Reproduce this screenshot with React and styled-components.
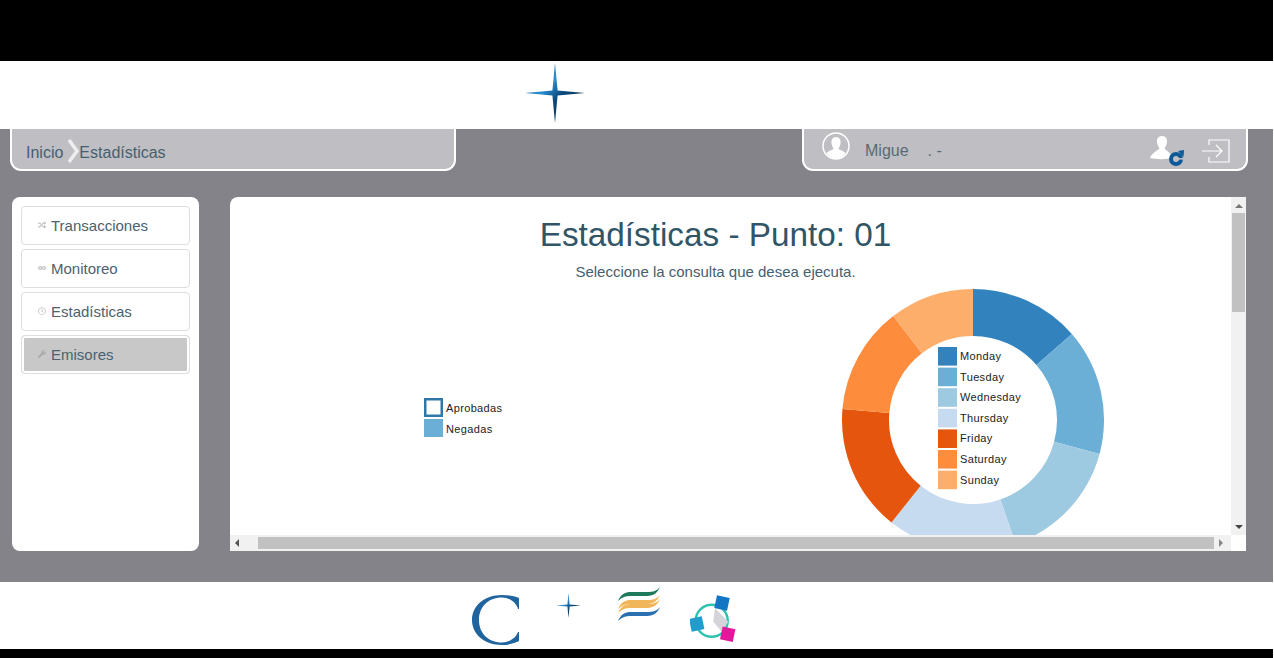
import React from "react";
import styled, { createGlobalStyle } from "styled-components";
import { FaRandom, FaInfinity, FaRegClock, FaWrench } from "react-icons/fa";

const GlobalStyle = createGlobalStyle`
  html, body {
    margin: 0;
    padding: 0;
    background: #fff;
  }
  body {
    font-family: "Liberation Sans", Arial, sans-serif;
    overflow: hidden;
  }
`;

const Page = styled.div`
  width: 1273px;
  height: 658px;
  display: grid;
  grid-template-rows: 61px 68px 453px 67px 9px;
`;

const BlackBand = styled.div`
  background: #000;
`;

const Header = styled.header`
  background: #fff;
  display: flex;
  justify-content: center;
  align-items: flex-start;
  padding: 2px 163px 0 0;
  box-sizing: border-box;
`;

const Main = styled.main`
  background: #848389;
  padding: 0 25px 0 10px;
  display: flex;
  flex-direction: column;
`;

const TopBars = styled.div`
  display: flex;
  justify-content: space-between;
  margin-bottom: 26px;
`;

const TabBar = styled.div`
  width: 446px;
  height: 42px;
  box-sizing: border-box;
  background: #bfbfc3;
  border: 2px solid #fff;
  border-top: 0;
  border-radius: 0 0 11px 11px;
  display: flex;
  align-items: center;
  color: #46606f;
  font-size: 16px;
`;

const Crumbs = styled(TabBar)`
  padding: 8px 0 0 14px;
`;

const Chevron = styled.svg`
  width: 12px;
  height: 24px;
  margin: -4px 0 0 4px;
  flex: none;
`;

const UserBar = styled(TabBar)`
  padding-left: 18px;
`;

const Avatar = styled.svg`
  width: 28px;
  height: 28px;
  margin: -7px 15px 0 0;
  flex: none;
`;

const UserName = styled.span`
  color: #566a78;
  margin-top: 3px;
`;

const UserDots = styled.span`
  color: #566a78;
  margin: 3px 0 0 19px;
`;

const BarIcons = styled.div`
  margin-left: auto;
  display: flex;
  align-items: center;
  gap: 16px;
  padding: 3px 16px 0 0;
`;

const Body = styled.div`
  display: flex;
  gap: 31px;
  margin-left: 2px;
  height: 354px;
`;

const Sidebar = styled.nav`
  width: 187px;
  flex: none;
  box-sizing: border-box;
  background: #fff;
  border-radius: 8px;
  padding: 9px;
  display: flex;
  flex-direction: column;
  gap: 4px;
`;

const MenuItem = styled.div`
  height: 39px;
  box-sizing: border-box;
  border: 1px solid #dedede;
  border-radius: 4px;
  background: ${(props) => (props.$active ? "#c8c8c8" : "#fff")};
  box-shadow: ${(props) => (props.$active ? "inset 0 0 0 2px #fff" : "none")};
  display: flex;
  align-items: center;
  color: #4b626e;
  font-size: 15px;
  line-height: 17px;
  padding: 0 0 1px 16px;
  gap: 5px;

  svg {
    width: 8px;
    height: 8px;
    color: ${(props) => (props.$active ? "#a8a8a8" : "#c4c4c4")};
    flex: none;
  }
`;

const Panel = styled.section`
  width: 1016px;
  flex: none;
  background: #fff;
  border-radius: 8px 0 0 0;
  overflow: hidden;
  display: grid;
  grid-template-columns: 1fr 15px;
  grid-template-rows: 1fr 16px;
`;

const Content = styled.div`
  overflow: hidden;
  min-width: 0;
  min-height: 0;
`;

const Heading = styled.div`
  text-align: center;
  padding-right: 30px;
`;

const Title = styled.h1`
  margin: 18px 0 0;
  font-size: 33.3px;
  line-height: 40px;
  font-weight: 400;
  color: #2f5567;
`;

const Subtitle = styled.p`
  margin: 8px 0 0;
  font-size: 15px;
  line-height: 18px;
  color: #46606f;
`;

const ChartRow = styled.div`
  display: flex;
  align-items: flex-start;
  margin-top: 8px;
  padding-left: 194px;
`;

const BarLegend = styled.svg`
  width: 90px;
  height: 40px;
  margin-top: 109px;
  flex: none;
`;

const Donut = styled.svg`
  width: 262px;
  height: 262px;
  margin-left: 328px;
  flex: none;
`;

const LegendText = styled.text`
  font-family: "Liberation Sans", Arial, sans-serif;
  font-size: 11px;
  letter-spacing: 0.35px;
  fill: #222;
`;

const VTrack = styled.div`
  background: #f1f1f1;
  display: flex;
  flex-direction: column;
  align-items: center;
  justify-content: space-between;
  padding: 5px 0 4px;
  box-sizing: border-box;
`;

const VThumb = styled.div`
  width: 13px;
  height: 99px;
  background: #c1c1c1;
  margin-top: 3px;
`;

const HTrack = styled.div`
  background: #f1f1f1;
  display: flex;
  align-items: center;
  padding: 0 6px 0 3px;
  box-sizing: border-box;
`;

const HThumb = styled.div`
  width: 956px;
  height: 12px;
  background: #c1c1c1;
  margin: 0 auto 0 17px;
`;

const Arrow = styled.svg`
  width: 8px;
  height: 8px;
  flex: none;
`;

const Spacer = styled.div`
  flex: 1;
`;

const Corner = styled.div`
  background: #fff;
`;

const Footer = styled.footer`
  background: #fff;
  display: flex;
  align-items: flex-start;
  padding-left: 472px;
  box-sizing: border-box;
`;

const FooterLogo = styled.div`
  display: flex;
  margin: ${(props) => props.$top || 0}px 0 0 ${(props) => props.$gap || 0}px;
`;

const weekData = [
  { day: "Monday", to: 49, color: "#3182bd" },
  { day: "Tuesday", to: 105, color: "#6baed6" },
  { day: "Wednesday", to: 161, color: "#9ecae1" },
  { day: "Thursday", to: 218.5, color: "#c6dbef" },
  { day: "Friday", to: 274.8, color: "#e6550d" },
  { day: "Saturday", to: 322.5, color: "#fd8d3c" },
  { day: "Sunday", to: 360, color: "#fdae6b" },
];

function polar(r, deg) {
  const a = (deg * Math.PI) / 180;
  return `${(131 + r * Math.sin(a)).toFixed(2)} ${(131 - r * Math.cos(a)).toFixed(2)}`;
}

function arcPath(from, to) {
  const R = 131;
  const r = 84;
  return `M${polar(R, from)} A${R} ${R} 0 0 1 ${polar(R, to)} L${polar(r, to)} A${r} ${r} 0 0 0 ${polar(r, from)} Z`;
}

function DonutChart() {
  return (
    <Donut viewBox="0 0 262 262">
      {weekData.map((d, i) => (
        <path key={d.day} d={arcPath(i ? weekData[i - 1].to : 0, d.to)} fill={d.color} />
      ))}
      {weekData.map((d, i) => (
        <g key={d.day} transform={`translate(96 ${58 + i * 20.6})`}>
          <rect width="19" height="18.6" fill={d.color} />
          <LegendText x="22" y="13">{d.day}</LegendText>
        </g>
      ))}
    </Donut>
  );
}

function Star({ size, id }) {
  return (
    <svg width={size} height={size} viewBox="0 0 60 60">
      <defs>
        <linearGradient id={id} x1="0" y1="0" x2="1" y2="1">
          <stop offset="0" stopColor="#0e3f6b" />
          <stop offset="0.38" stopColor="#2a8fd4" />
          <stop offset="0.56" stopColor="#0d4a7c" />
          <stop offset="1" stopColor="#08182a" />
        </linearGradient>
      </defs>
      <path
        d="M30 0 L32.6 27.4 L60 30 L32.6 32.6 L30 60 L27.4 32.6 L0 30 L27.4 27.4 Z"
        fill={`url(#${id})`}
      />
    </svg>
  );
}

function CLogo() {
  return (
    <svg width="48" height="67" viewBox="0 0 48 67">
      <path
        transform="translate(0 13)"
        d="M47 3 C42 1 36 0 30 0 C12 0 0 11 0 25 C0 39 12 50 30 50 C37 50 43 48 47 46 L47 37 L46 37 C44 43 37 47.5 30 47.5 C16 47.5 7 38 7 25 C7 12 16 2.5 30 2.5 C37 2.5 44 7 46 14 L47 14 Z"
        fill="#1f639f"
      />
    </svg>
  );
}

const ribbon =
  "M1 19 C4 12 8 10 14 10 L30 10 C36 10 40 9 43 5 C41 10 37 14 30 14 L14 14 C9 14 5 15 1 19 Z";

function WavesLogo() {
  return (
    <svg width="44" height="67" viewBox="0 0 44 67">
      <path d={ribbon} fill="#1f7a5c" />
      <path d={ribbon} fill="#f2b65a" transform="translate(0 8)" />
      <path d={ribbon} fill="#f2b65a" transform="translate(0 12)" />
      <path d={ribbon} fill="#2a6fb0" transform="translate(0 20)" />
    </svg>
  );
}

function NodesLogo() {
  return (
    <svg width="46" height="67" viewBox="0 0 46 67">
      <circle cx="21.7" cy="38.7" r="16" fill="none" stroke="#2fc2b0" strokeWidth="2.5" />
      <path d="M25 26 L38.3 39.7 L31.7 49.7 L23.3 39.7 Z" fill="#d4d4da" />
      <rect x="25.5" y="14.5" width="13" height="13" fill="#1376c4" transform="rotate(12 32 21)" />
      <rect x="0.2" y="35.5" width="13" height="13" fill="#1e9dce" transform="rotate(-12 6.7 42)" />
      <rect x="31.2" y="45.8" width="13" height="13" fill="#e5169c" transform="rotate(12 37.7 52.3)" />
    </svg>
  );
}

export default function App() {
  return (
    <Page>
      <GlobalStyle />
      <BlackBand />
      <Header>
        <Star size={60} id="headerStar" />
      </Header>
      <Main>
        <TopBars>
          <Crumbs>
            Inicio
            <Chevron viewBox="0 0 12 24">
              <path d="M2 1 L10 12 L2 23" fill="none" stroke="#eeeef0" strokeWidth="3.5" />
            </Chevron>
            Estadísticas
          </Crumbs>
          <UserBar>
            <Avatar viewBox="0 0 28 28">
              <circle cx="14" cy="14" r="13" fill="#bfbfc3" stroke="#fff" strokeWidth="1.5" />
              <path d="M14 5 C10.5 5 9 8 9.5 11.5 C10 14 11 15.5 11.5 17 C9 18.5 5.5 19.5 4.5 21 C7 25 10.5 26.5 14 26.5 C17.5 26.5 21 25 23.5 21 C22.5 19.5 19 18.5 16.5 17 C17 15.5 18 14 18.5 11.5 C19 8 17.5 5 14 5 Z" fill="#fff" />
            </Avatar>
            <UserName>Migue</UserName>
            <UserDots>. -</UserDots>
            <BarIcons>
              <svg width="37" height="31" viewBox="0 0 37 31">
                <path d="M13 1 C9 1 7.5 4 8 7.5 C8.5 10 9.5 12 10.5 13.5 C8 16 3 18 1 23 C8 24.5 17 24.5 24 23 C22 18 17.5 16 15.5 13.5 C16.5 12 17.5 10 18 7.5 C18.5 4 17 1 13 1 Z" fill="#fff" />
                <circle cx="27" cy="24" r="5" fill="none" stroke="#0d5a98" strokeWidth="4" />
                <path d="M29 16 L35 15 L34.5 22 Z" fill="#0d5a98" />
                <rect x="27" y="23" width="8" height="1.6" fill="#bfbfc3" />
              </svg>
              <svg width="28" height="24" viewBox="0 0 28 24" fill="none" stroke="#fff" strokeWidth="1.2">
                <path d="M7 6 V1 H27 V23 H7 V18" />
                <path d="M0 12 H19 M14 6 L20 12 L14 18" />
              </svg>
            </BarIcons>
          </UserBar>
        </TopBars>
        <Body>
          <Sidebar>
            <MenuItem><FaRandom />Transacciones</MenuItem>
            <MenuItem><FaInfinity />Monitoreo</MenuItem>
            <MenuItem><FaRegClock />Estadísticas</MenuItem>
            <MenuItem $active><FaWrench />Emisores</MenuItem>
          </Sidebar>
          <Panel>
            <Content>
              <Heading>
                <Title>Estadísticas - Punto: 01</Title>
                <Subtitle>Seleccione la consulta que desea ejecuta.</Subtitle>
              </Heading>
              <ChartRow>
                <BarLegend viewBox="0 0 90 40">
                  <rect x="1.25" y="1.25" width="16.5" height="16.5" fill="#fff" stroke="#2f78a8" strokeWidth="2.5" />
                  <LegendText x="22" y="14">Aprobadas</LegendText>
                  <rect y="21" width="19" height="18" fill="#6baed6" />
                  <LegendText x="22" y="35">Negadas</LegendText>
                </BarLegend>
                <DonutChart />
              </ChartRow>
            </Content>
            <VTrack>
              <Arrow viewBox="0 0 8 8"><path d="M0 6 L4 2 L8 6 Z" fill="#777" /></Arrow>
              <VThumb />
              <Spacer />
              <Arrow viewBox="0 0 8 8"><path d="M0 2 L8 2 L4 6 Z" fill="#444" /></Arrow>
            </VTrack>
            <HTrack>
              <Arrow viewBox="0 0 8 8"><path d="M6 0 L6 8 L2 4 Z" fill="#555" /></Arrow>
              <HThumb />
              <Arrow viewBox="0 0 8 8"><path d="M2 0 L2 8 L6 4 Z" fill="#888" /></Arrow>
            </HTrack>
            <Corner />
          </Panel>
        </Body>
      </Main>
      <Footer>
        <FooterLogo><CLogo /></FooterLogo>
        <FooterLogo $gap={36} $top={11}><Star size={25} id="footerStar" /></FooterLogo>
        <FooterLogo $gap={36}><WavesLogo /></FooterLogo>
        <FooterLogo $gap={29}><NodesLogo /></FooterLogo>
      </Footer>
      <BlackBand />
    </Page>
  );
}
